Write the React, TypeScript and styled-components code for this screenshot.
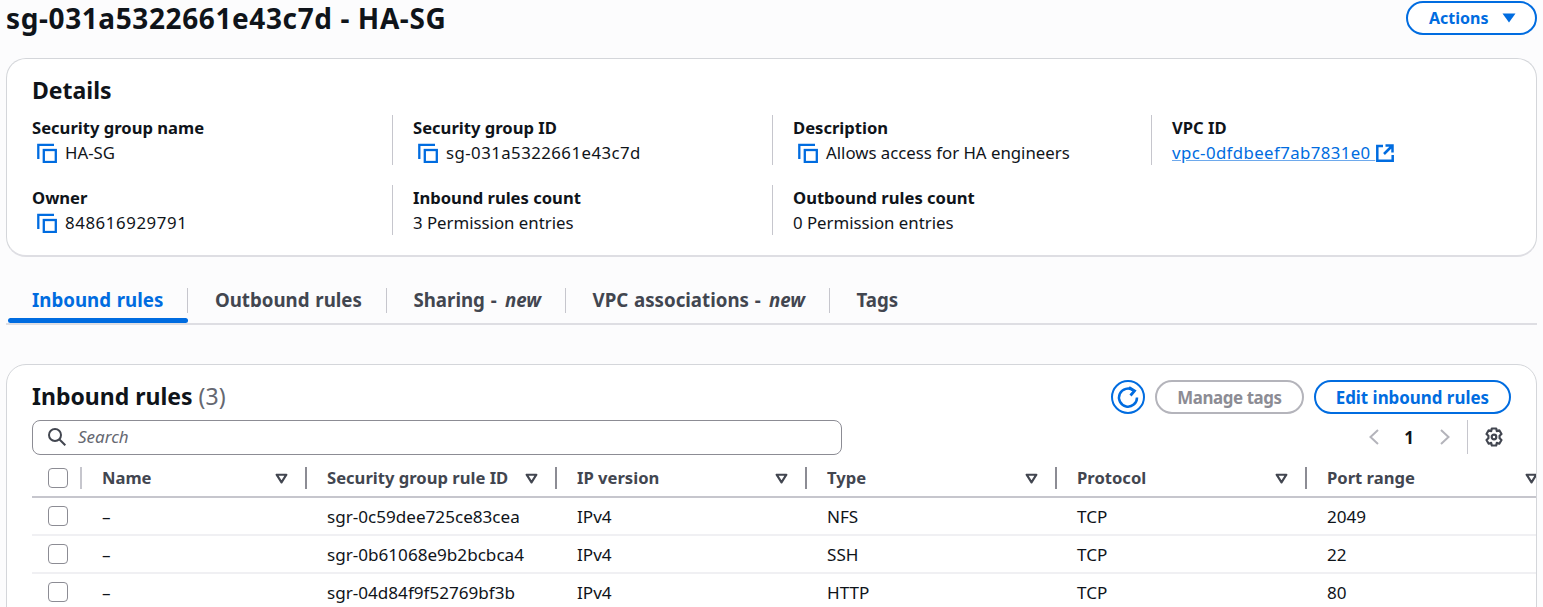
import styled, { createGlobalStyle } from 'styled-components';

const BLUE = '#006ce0';

const GlobalStyle = createGlobalStyle`
  html, body {
    margin: 0;
    padding: 0;
    height: 607px;
    overflow: hidden;
    background: #fcfcfd;
    font-family: "Noto Sans", "Open Sans", sans-serif;
    color: #0f141a;
  }
  * { box-sizing: border-box; }
`;

const details = [
  [
    { label: 'Security group name', value: 'HA-SG', copy: true },
    { label: 'Owner', value: '848616929791', copy: true, spacing: 0.6 },
  ],
  [
    { label: 'Security group ID', value: 'sg-031a5322661e43c7d', copy: true, spacing: 0.45 },
    { label: 'Inbound rules count', value: '3 Permission entries' },
  ],
  [
    { label: 'Description', value: 'Allows access for HA engineers', copy: true },
    { label: 'Outbound rules count', value: '0 Permission entries' },
  ],
];

const columns = ['Name', 'Security group rule ID', 'IP version', 'Type', 'Protocol', 'Port range'];

const rows = [
  ['–', 'sgr-0c59dee725ce83cea', 'IPv4', 'NFS', 'TCP', '2049'],
  ['–', 'sgr-0b61068e9b2bcbca4', 'IPv4', 'SSH', 'TCP', '22'],
  ['–', 'sgr-04d84f9f52769bf3b', 'IPv4', 'HTTP', 'TCP', '80'],
];

const CopyIcon = () => (
  <CopySvg viewBox="0 0 20 20" fill="none" stroke={BLUE} strokeWidth="2.300">
    <path d="M17 1.800H1.300V16" />
    <rect x="6.800" y="7" width="12" height="12" />
  </CopySvg>
);

const ExternalIcon = () => (
  <ExternalSvg viewBox="0 0 18 18" fill="none" stroke={BLUE} strokeWidth="2.500">
    <path d="M7 2H1.300v14.700H16.700V11" />
    <path d="M9.500 1.500h7v7M16 2L8 10" />
  </ExternalSvg>
);

const Caret = () => (
  <CaretSvg viewBox="0 0 12 10" fill="none" stroke="#424650" strokeWidth="2" strokeLinejoin="round">
    <path d="M1.500 1.500h9L6 8.500z" />
  </CaretSvg>
);

export default function App() {
  return (
    <Page>
      <GlobalStyle />
      <TitleRow>
        <Title>sg-031a5322661e43c7d - HA-SG</Title>
        <ActionsButton>
          Actions
          <svg width="14" height="10" viewBox="0 0 14 10" fill={BLUE}>
            <path d="M0.500 0.500h13L7 9.500z" />
          </svg>
        </ActionsButton>
      </TitleRow>

      <DetailsCard>
        <CardTitle>Details</CardTitle>
        <DetailsGrid>
          {details.map((col, i) => (
            <DetailsColumn key={i}>
              {col.map((item) => (
                <Field key={item.label} $first={i === 0}>
                  <FieldLabel>{item.label}</FieldLabel>
                  <FieldValue $spacing={item.spacing}>
                    {item.copy && <CopyIcon />}
                    {item.value}
                  </FieldValue>
                </Field>
              ))}
            </DetailsColumn>
          ))}
          <DetailsColumn>
            <Field>
              <FieldLabel>VPC ID</FieldLabel>
              <FieldValue $spacing={0.4}>
                <VpcLink>vpc-0dfdbeef7ab7831e0 </VpcLink>
                <ExternalIcon />
              </FieldValue>
            </Field>
          </DetailsColumn>
        </DetailsGrid>
      </DetailsCard>

      <Tabs>
        <Tab $active>Inbound rules</Tab>
        <Tab>Outbound rules</Tab>
        <Tab>Sharing - <em>new</em></Tab>
        <Tab>VPC associations - <em>new</em></Tab>
        <Tab $last>Tags</Tab>
      </Tabs>

      <RulesCard>
        <RulesHeader>
          <RulesTitle>Inbound rules <span>(3)</span></RulesTitle>
          <HeaderActions>
            <RefreshButton>
              <svg width="24" height="24" viewBox="0 0 24 24" fill="none" stroke={BLUE} strokeWidth="2.500">
                <path d="M17.500 5.500A9 9 0 1 0 21 12.500" />
                <path d="M13 2.500l5.500 3.300-4 4.700" strokeWidth="2.800" />
              </svg>
            </RefreshButton>
            <PillButton $disabled>Manage tags</PillButton>
            <PillButton>Edit inbound rules</PillButton>
          </HeaderActions>
        </RulesHeader>

        <FilterRow>
          <SearchBox>
            <svg width="18" height="18" viewBox="0 0 18 18" fill="none" stroke="#424650" strokeWidth="2">
              <circle cx="7" cy="7" r="6" />
              <path d="M11.500 11.500L17.300 17.300" />
            </svg>
            <SearchText>Search</SearchText>
          </SearchBox>
          <Pager>
            <svg width="12" height="16" viewBox="0 0 12 16" fill="none" stroke="#b4b4bb" strokeWidth="2">
              <path d="M10 1L2.500 8l7.500 7" />
            </svg>
            <PageNumber>1</PageNumber>
            <svg width="12" height="16" viewBox="0 0 12 16" fill="none" stroke="#b4b4bb" strokeWidth="2">
              <path d="M2 1l7.500 7L2 15" />
            </svg>
            <PagerDivider />
            <svg width="20" height="20" viewBox="0 0 20 20" fill="none" stroke="#424650" strokeWidth="2.200" strokeLinejoin="round">
              <path d="M7.800 1.500h4.400l.6 2.600 2.500-.8 2.200 3.700-1.900 1.800v2.400l1.900 1.800-2.200 3.700-2.500-.8-.6 2.600H7.800l-.6-2.600-2.500.8-2.200-3.700 1.900-1.800V8.800L2.500 7l2.200-3.700 2.500.8z" />
              <circle cx="10" cy="10" r="2.300" />
            </svg>
          </Pager>
        </FilterRow>

        <Table>
          <HeaderRow>
            <CheckCell $divider><Checkbox /></CheckCell>
            {columns.map((c) => (
              <HeaderCell key={c}>
                <span>{c}</span>
                <Caret />
              </HeaderCell>
            ))}
          </HeaderRow>
          {rows.map((row) => (
            <BodyRow key={row[1]}>
              <CheckCell><Checkbox /></CheckCell>
              {row.map((cell, i) => (
                <BodyCell key={i}>{cell}</BodyCell>
              ))}
            </BodyRow>
          ))}
        </Table>
      </RulesCard>
    </Page>
  );
}

const Page = styled.div`
  width: 1543px;
  height: 607px;
  overflow: hidden;
  padding: 0 6px;
`;

const TitleRow = styled.div`
  display: flex;
  justify-content: space-between;
  align-items: flex-start;
  height: 58px;
`;

const Title = styled.h1`
  margin: 0;
  font-size: 28px;
  letter-spacing: 0.6px;
  line-height: 36px;
  font-weight: 700;
`;

const ActionsButton = styled.button`
  display: flex;
  align-items: center;
  gap: 13px;
  width: 131px;
  height: 34px;
  margin-top: 1px;
  padding: 0 0 0 21px;
  border: 2px solid ${BLUE};
  border-radius: 17px;
  background: #fff;
  color: ${BLUE};
  font: 700 16px "Noto Sans", sans-serif;
`;

const DetailsCard = styled.section`
  height: 199px;
  padding: 15px 25px 0;
  background: #fff;
  border: 1px solid #d4d6da;
  border-bottom: 2px solid #dedee3;
  border-radius: 20px;
`;

const CardTitle = styled.h2`
  margin: 0 0 9px;
  font-size: 23px;
  line-height: 32px;
  font-weight: 700;
`;

const DetailsGrid = styled.div`
  display: grid;
  grid-template-columns: 360px 380px 379px 1fr;
`;

const DetailsColumn = styled.div`
  display: flex;
  flex-direction: column;
  gap: 20px;
`;

const Field = styled.div<{ $first?: boolean }>`
  display: flex;
  flex-direction: column;
  height: 50px;
  justify-content: center;
  padding-left: ${({ $first }) => ($first ? '0' : '20px')};
  border-left: ${({ $first }) => ($first ? 'none' : '1px solid #c6c6cd')};
`;

const FieldLabel = styled.div`
  font-size: 16.600px;
  line-height: 25px;
  font-weight: 700;
`;

const FieldValue = styled.div<{ $spacing?: number }>`
  display: flex;
  align-items: center;
  font-size: 16.800px;
  line-height: 25px;
  letter-spacing: ${({ $spacing }) => $spacing ?? 0}px;
`;

const CopySvg = styled.svg`
  width: 20px;
  height: 20px;
  margin: 1px 8px 0 5px;
  flex: none;
`;

const ExternalSvg = styled.svg`
  width: 18px;
  height: 18px;
  margin-left: 1px;
`;

const VpcLink = styled.a`
  color: ${BLUE};
  white-space: pre;
  text-decoration: underline;
  text-decoration-color: #6ea9ec;
`;

const Tabs = styled.nav`
  display: flex;
  height: 37px;
  margin-top: 31px;
  border-bottom: 2px solid #dedee3;
  padding-left: 2px;
  align-items: stretch;
`;

const Tab = styled.div<{ $active?: boolean; $last?: boolean }>`
  position: relative;
  display: flex;
  align-items: flex-start;
  white-space: pre;
  height: 37px;
  padding: 0 25px 0 ${({ $active }) => ($active ? '24px' : '26.500px')};
  font-size: 18.700px;
  word-spacing: 0.900px;
  line-height: 24px;
  font-weight: 700;
  color: ${({ $active }) => ($active ? BLUE : '#424650')};

  em {
    margin-left: 2.500px;
    font-style: italic;
  }

  &::after {
    content: '';
    display: ${({ $last }) => ($last ? 'none' : 'block')};
    position: absolute;
    right: 0;
    top: 0;
    height: 25px;
    width: 1px;
    background: #c6c6cd;
  }

  &::before {
    content: '';
    display: ${({ $active }) => ($active ? 'block' : 'none')};
    position: absolute;
    left: 0;
    right: 0;
    bottom: 2px;
    height: 5px;
    border-radius: 3px;
    background: ${BLUE};
  }
`;

const RulesCard = styled.section`
  margin-top: 39px;
  height: 300px;
  padding: 15px 0 0 25px;
  background: #fff;
  border: 1px solid #d4d6da;
  border-radius: 20px;
  overflow: hidden;
`;

const RulesHeader = styled.div`
  display: flex;
  justify-content: space-between;
  align-items: flex-start;
  padding-right: 25px;
  height: 37px;
`;

const RulesTitle = styled.h2`
  margin: 0;
  font-size: 23px;
  line-height: 32px;
  font-weight: 700;

  span {
    font-weight: 400;
    color: #656871;
  }
`;

const HeaderActions = styled.div`
  display: flex;
  align-items: center;
  gap: 10px;
`;

const RefreshButton = styled.button`
  display: flex;
  align-items: center;
  justify-content: center;
  width: 34px;
  height: 34px;
  padding: 0;
  background: #fff;
  border: 2px solid ${BLUE};
  border-radius: 50%;
`;

const PillButton = styled.button<{ $disabled?: boolean }>`
  height: 34px;
  padding: 0 20px;
  background: #fff;
  border: 2px solid ${({ $disabled }) => ($disabled ? '#b4b4bb' : BLUE)};
  border-radius: 17px;
  color: ${({ $disabled }) => ($disabled ? '#8c8c94' : BLUE)};
  font: 700 16.900px "Noto Sans", sans-serif;
  letter-spacing: ${({ $disabled }) => ($disabled ? '-0.400px' : '0')};
`;

const FilterRow = styled.div`
  display: flex;
  justify-content: space-between;
  align-items: center;
  height: 40px;
  padding-right: 32px;
`;

const SearchBox = styled.div`
  display: flex;
  align-items: center;
  gap: 12px;
  width: 810px;
  height: 35px;
  padding-left: 15px;
  border: 1px solid #8c8c94;
  border-radius: 8px;
`;

const SearchText = styled.span`
  margin-top: -2px;
  font-size: 17px;
  font-style: italic;
  color: #656871;
`;

const Pager = styled.div`
  display: flex;
  align-items: center;
`;

const PageNumber = styled.span`
  margin: 0 25px 0 24px;
  font-size: 17px;
  font-weight: 700;
`;

const PagerDivider = styled.div`
  width: 1px;
  height: 34px;
  margin: 0 16px;
  background: #c6c6cd;
`;

const Table = styled.div`
  margin-top: 3px;
`;

const rowGrid = `
  display: grid;
  grid-template-columns: 50px 225px 250px 250px 250px 250px 250px;
  width: 1525px;
`;

const HeaderRow = styled.div`
  ${rowGrid}
  height: 38px;
  align-items: center;
  border-bottom: 2px solid #c6c6cd;
`;

const BodyRow = styled.div`
  ${rowGrid}
  height: 38px;
  align-items: center;
  border-bottom: 2px solid #f0f0f3;
`;

const CheckCell = styled.div<{ $divider?: boolean }>`
  display: flex;
  align-items: center;
  height: 22px;
  padding-left: 16px;
  border-right: ${({ $divider }) => ($divider ? '2px solid #c6c6cd' : 'none')};
`;

const Checkbox = styled.span`
  display: block;
  width: 20px;
  height: 20px;
  background: #fff;
  border: 1.500px solid #8c8c94;
  border-radius: 4px;
`;

const HeaderCell = styled.div`
  display: flex;
  align-items: center;
  justify-content: space-between;
  height: 22px;
  padding: 0 17px 0 20px;
  border-right: 2px solid #8c8c94;
  font-size: 16.600px;
  font-weight: 700;
  color: #424650;

  span {
    margin-top: -2px;
  }
`;

const CaretSvg = styled.svg`
  width: 13px;
  height: 11px;
  flex: none;
`;

const BodyCell = styled.div`
  padding: 2px 0 0 20px;
  font-size: 17.100px;
  line-height: 24px;
`;
